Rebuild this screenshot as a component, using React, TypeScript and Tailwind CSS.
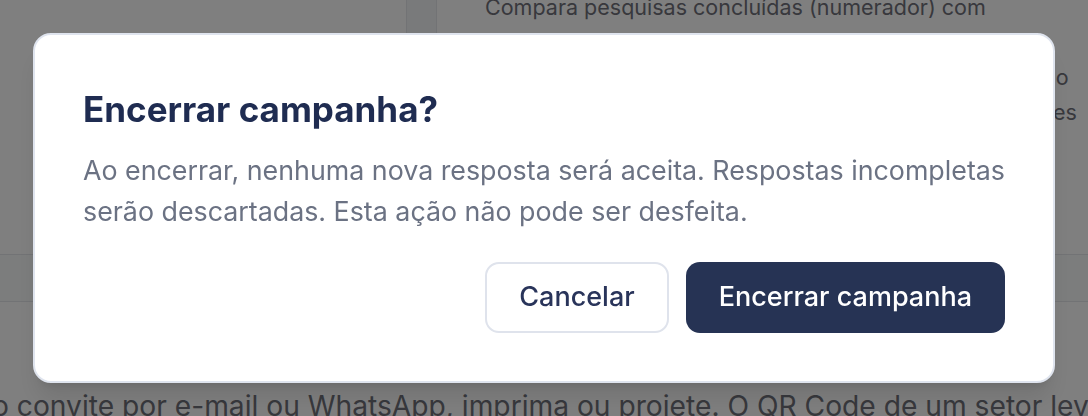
import React, { useState } from 'react';

interface ConfirmDialogProps {
  isOpen: boolean;
  title: string;
  description: string;
  confirmLabel: string;
  onCancel: () => void;
  onConfirm: () => void;
}

const font = { fontFamily: 'Inter, "Liberation Sans", sans-serif' };

const ConfirmDialog: React.FC<ConfirmDialogProps> = ({ isOpen, title, description, confirmLabel, onCancel, onConfirm }) => {
  if (!isOpen) {
    return null;
  }

  return (
    <div className="fixed inset-0 z-40 bg-black/50 flex items-center justify-center p-[33px]">
      <div className="w-full bg-white rounded-[18px] border-2 border-[#dfe4ee] shadow-xl px-[48px] pt-[55px] pb-[48px]">
        <h2 className="text-[35px] leading-[38px] font-bold text-[#1f2c51]">{title}</h2>
        <p className="mt-[22px] text-[26.8px] leading-[41px] text-[#6b7283]">{description}</p>
        <div className="flex justify-end gap-[17px] mt-[30px]">
          <button
            type="button"
            onClick={onCancel}
            className="h-[71px] px-[32px] rounded-[14px] border-2 border-[#dfe3ec] bg-white text-[27px] font-medium text-[#29345a]"
          >
            Cancelar
          </button>
          <button
            type="button"
            onClick={onConfirm}
            className="h-[71px] px-[33px] rounded-[14px] bg-[#263354] text-[27px] font-medium text-white"
          >
            {confirmLabel}
          </button>
        </div>
      </div>
    </div>
  );
};

const App: React.FC = () => {
  const [open, setOpen] = useState(true);

  return (
    <div className="w-[1088px] h-[416px] overflow-hidden bg-white flex flex-col" style={font}>
      <div className="flex h-[254px] shrink-0">
        <div className="w-[407px] border-r border-gray-200"></div>
        <div className="w-[30px] bg-gray-100 border-r border-gray-200"></div>
        <div className="flex-1 pl-[48px] -mt-[45px] text-[21.5px] leading-[35px] text-[#70717a] whitespace-nowrap overflow-hidden">
          <p>Cada setor tem sua própria meta de respostas.</p>
          <p>Compara pesquisas concluídas (numerador) com</p>
          <p>os convites enviados no período selecionado.</p>
          <p>Considera respondentes únicos de cada setor no período</p>
          <p>e soma os resultados obtidos para todos os seus gestores</p>
        </div>
      </div>
      <div className="h-[48px] shrink-0 border-y border-gray-200 bg-gray-50"></div>
      <div className="flex-1 flex items-end">
        <p className="-ml-[8px] -mb-[7px] text-[28.2px] leading-[34px] text-[#70717a] whitespace-nowrap">
          o convite por e-mail ou WhatsApp, imprima ou projete. O QR Code de um setor leva direto ao questionário.
        </p>
      </div>
      <ConfirmDialog
        isOpen={open}
        title="Encerrar campanha?"
        description="Ao encerrar, nenhuma nova resposta será aceita. Respostas incompletas serão descartadas. Esta ação não pode ser desfeita."
        confirmLabel="Encerrar campanha"
        onCancel={() => setOpen(false)}
        onConfirm={() => setOpen(false)}
      />
    </div>
  );
};

export default App;
